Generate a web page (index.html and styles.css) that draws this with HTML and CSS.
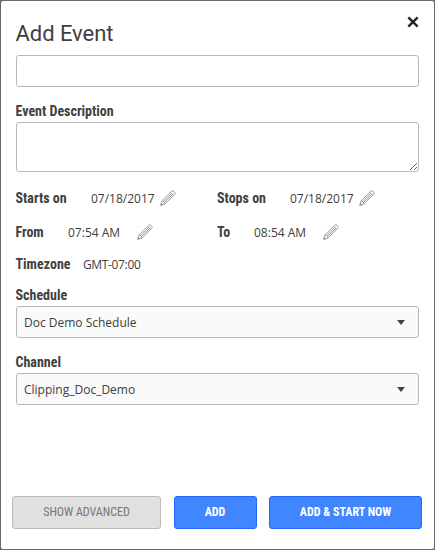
FILE: index.html
```html
<!DOCTYPE html>
<html lang="en">
<head>
<meta charset="utf-8">
<title>Add Event</title>
<link rel="stylesheet" href="styles.css">
</head>
<body>
<svg class="defs" aria-hidden="true">
  <symbol id="pencil" viewBox="0 0 16 16">
    <path d="M.8 15.2 2 10.8 11.7 1.2Q12.9.2 14.1 1.5L14.6 2Q15.8 3.2 14.7 4.4L5.1 14Z M2 10.8Q4.7 11.1 5.1 14 M3.6 11.6 12.2 3 M4.6 12.5 13.2 3.9 M10.6 2.4 13.5 5.3 M.8 15.2 2.5 14.7 1.3 13.5Z"/>
  </symbol>
</svg>
<main class="dialog">
  <header class="header">
    <h1 class="title">Add Event</h1>
    <button class="close" aria-label="Close"><svg viewBox="0 0 12 12"><path d="M1.3 1.3 10.7 10.7M10.7 1.3 1.3 10.7"/></svg></button>
  </header>
  <input class="box name" type="text" aria-label="Event name">
  <label class="label description-label" for="description">Event Description</label>
  <textarea class="box description" id="description"></textarea>
  <div class="row dates">
    <div class="cell"><span class="label">Starts on</span><span class="value start-date">07/18/2017</span><svg class="pencil"><use href="#pencil"/></svg></div>
    <div class="cell"><span class="label">Stops on</span><span class="value stop-date">07/18/2017</span><svg class="pencil"><use href="#pencil"/></svg></div>
  </div>
  <div class="row times">
    <div class="cell"><span class="label">From</span><span class="value from-time">07:54 AM</span><svg class="pencil"><use href="#pencil"/></svg></div>
    <div class="cell"><span class="label">To</span><span class="value to-time">08:54 AM</span><svg class="pencil"><use href="#pencil"/></svg></div>
  </div>
  <div class="zone"><span class="label">Timezone</span><span class="value zone-value">GMT-07:00</span></div>
  <span class="label select-label">Schedule</span>
  <div class="box select"><span>Doc Demo Schedule</span><i class="arrow"></i></div>
  <span class="label select-label channel-label">Channel</span>
  <div class="box select"><span>Clipping_Doc_Demo</span><i class="arrow"></i></div>
  <footer class="actions">
    <button class="btn muted">SHOW ADVANCED</button>
    <button class="btn primary">ADD</button>
    <button class="btn primary">ADD &amp; START NOW</button>
  </footer>
</main>
</body>
</html>
```
FILE: styles.css
```css
* { box-sizing: border-box; }
body { margin: 0; background: #666; }
.defs { position: absolute; width: 0; height: 0; }
.dialog {
  display: flex;
  flex-direction: column;
  height: 550px;
  padding: 0 15px;
  border: 1px solid #666;
  border-radius: 3px;
  background: #fff;
  color: #404040;
  font: 12px/18px "Open Sans", sans-serif;
}
.header { display: flex; justify-content: space-between; height: 54px; flex: none; }
.title { margin: 19px 0 0 -.5px; font: 400 22px/28px Roboto, sans-serif; letter-spacing: -.05px; }
.close { width: 12px; height: 12px; margin: 15px 0 0; padding: 0; border: 0; background: none; }
.close svg { display: block; width: 12px; height: 12px; fill: none; stroke: #262626; stroke-width: 2.4; }
.box { display: block; flex: none; width: 403px; margin: 0; border: 1px solid #b8b8b8; border-radius: 3px; background: #fff; }
.name { height: 32px; }
.label { margin-left: -.5px; font: 700 14px/18px "Roboto Condensed", Roboto, sans-serif; font-stretch: 75%; white-space: nowrap; }
.cell + .cell .label { margin-left: 0; }
.description-label { margin-top: 15px; height: 20px; }
.description { height: 50px; }
.row { display: grid; grid-template-columns: 201px 201px; height: 18px; }
.dates { margin-top: 17px; }
.times { margin-top: 16px; }
.cell, .zone { display: grid; align-items: center; }
.dates .cell { grid-template-columns: 75px 69px 16px; }
.dates .cell + .cell { grid-template-columns: 73px 69px 16px; }
.times .cell { grid-template-columns: 52px 69px 16px; }
.times .cell + .cell { grid-template-columns: 37px 69px 16px; }
.zone { grid-template-columns: 67px 1fr; height: 18px; margin-top: 14px; }
.value { padding-top: 1px; line-height: 17px; white-space: nowrap; }
.zone-value { letter-spacing: -.35px; }
.pencil { width: 16px; height: 16px; fill: none; stroke: #888; stroke-width: .8; }
.select-label { margin-top: 13px; height: 20px; }
.channel-label { margin-top: 15px; height: 20px; }
.select { display: flex; align-items: center; justify-content: space-between; height: 32px; padding: 1px 13px 0 7px; background: #fafafa; }
.arrow { margin-top: -1px; border: 4px solid transparent; border-top: 5px solid #444; border-bottom: 0; }
.actions { display: grid; grid-template-columns: 149px 83px 153px; column-gap: 12.5px; margin: 91px -4px 0; }
.btn { height: 33px; padding: 0 0 1px; border: 1px solid; border-radius: 3px; font: 500 12px/18px "Roboto Condensed", Roboto, sans-serif; font-stretch: 75%; }
.muted { border-color: #bbb; background: #e0e0e0; color: #777; font-weight: 400; }
.primary { border-color: #2266ff; background: #4086ff; color: #fff; font-weight: 700; }
```
